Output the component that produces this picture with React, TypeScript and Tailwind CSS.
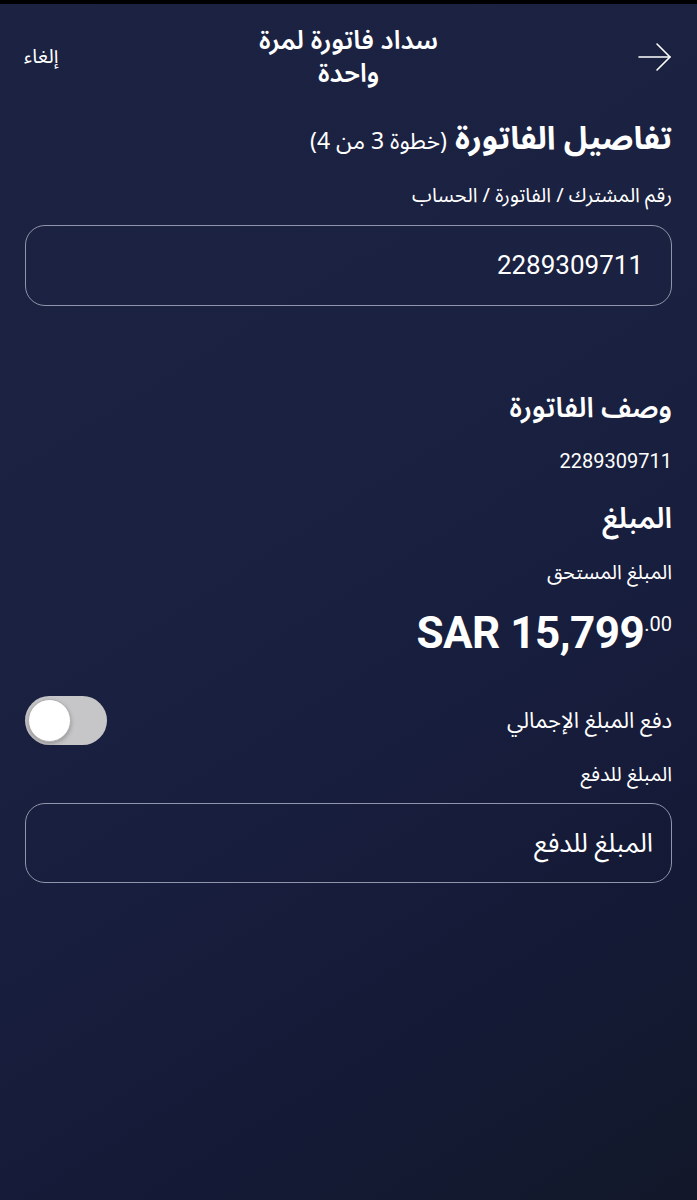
import { useState } from 'react';

const AR = "font-['Noto_Sans_Arabic','DejaVu_Sans',sans-serif]";
const NUM = "font-['Roboto','Liberation_Sans',sans-serif]";

function BackArrow() {
  return (
    <svg width="36" height="30" viewBox="0 0 36 30" fill="none" stroke="white" strokeWidth="1.6" strokeLinecap="round" strokeLinejoin="round">
      <path d="M2 15h31" />
      <path d="M20 2l13 13-13 13" />
    </svg>
  );
}

export default function App() {
  const [payFull, setPayFull] = useState(false);
  const [amount, setAmount] = useState('');

  return (
    <div
      dir="rtl"
      className={`min-h-[1200px] w-[697px] overflow-hidden bg-[linear-gradient(148deg,#1c2241_0%,#1b2140_40%,#171d3c_62%,#141a35_80%,#121829_100%)] text-white ${AR}`}
    >
      <div className="h-[4px] bg-black" />

      {/* Header */}
      <div className="flex items-center justify-between px-6 pt-[20px]">
        <button type="button" className="flex w-[80px] justify-start">
          <BackArrow />
        </button>
        <h1 className="w-[210px] text-center text-[26px] font-semibold leading-[33px]">
          سداد فاتورة لمرة واحدة
        </h1>
        <button type="button" className="w-[80px] text-left text-[20px]">
          إلغاء
        </button>
      </div>

      <div className="px-[25px]">
        {/* Step title */}
        <div className="mt-[29px] flex items-baseline gap-2">
          <h2 className="text-[32px] font-bold leading-[40px]">تفاصيل الفاتورة</h2>
          <span className="text-[23px] leading-[40px]">(خطوة 3 من 4)</span>
        </div>

        <p className="mt-[20px] text-[20px] leading-[28px]">رقم المشترك / الفاتورة / الحساب</p>

        <div className="mt-[15px] flex h-[81px] items-center rounded-[20px] border-[1.5px] border-[#9095ab] px-[28px]">
          <span className={`text-[26px] ${NUM}`}>2289309711</span>
        </div>

        {/* Description */}
        <h3 className="mt-[85px] text-[28px] font-semibold leading-[36px]">وصف الفاتورة</h3>
        <p className={`mt-[22px] text-[20px] leading-[24px] ${NUM}`}>2289309711</p>

        {/* Amount */}
        <h3 className="mt-[28px] text-[29px] font-semibold leading-[36px]">المبلغ</h3>
        <p className="mt-[22px] text-[20px] leading-[28px]">المبلغ المستحق</p>
        <div dir="ltr" className={`mt-[22px] flex items-start justify-end ${NUM}`}>
          <span className="text-[44px] font-bold leading-[48px] tracking-[-0.5px]">SAR 15,799</span>
          <span className="mt-[5px] text-[20px] leading-[20px]">.00</span>
        </div>

        {/* Full amount toggle */}
        <div className="mt-[39px] flex items-center justify-between">
          <span className="text-[22px] leading-[30px]">دفع المبلغ الإجمالي</span>
          <button
            type="button"
            dir="ltr"
            onClick={() => setPayFull((v) => !v)}
            className={`flex h-[49px] w-[82px] items-center rounded-full p-[3px] ${payFull ? 'justify-end bg-[#34c759]' : 'justify-start bg-[#c6c6c8]'}`}
          >
            <span className="h-[43px] w-[43px] rounded-full border border-[#b0b0b4] bg-white shadow-[0_2px_4px_rgba(0,0,0,0.25)]" />
          </button>
        </div>

        <p className="mt-[16px] text-[20px] leading-[28px]">المبلغ للدفع</p>

        <div className="mt-[14px] flex h-[80px] items-center rounded-[20px] border-[1.5px] border-[#9095ab] px-[18px]">
          <input
            value={amount}
            onChange={(e) => setAmount(e.target.value)}
            placeholder="المبلغ للدفع"
            className={`w-full bg-transparent text-[26px] text-white outline-none placeholder:text-white ${AR}`}
          />
        </div>
      </div>
    </div>
  );
}
